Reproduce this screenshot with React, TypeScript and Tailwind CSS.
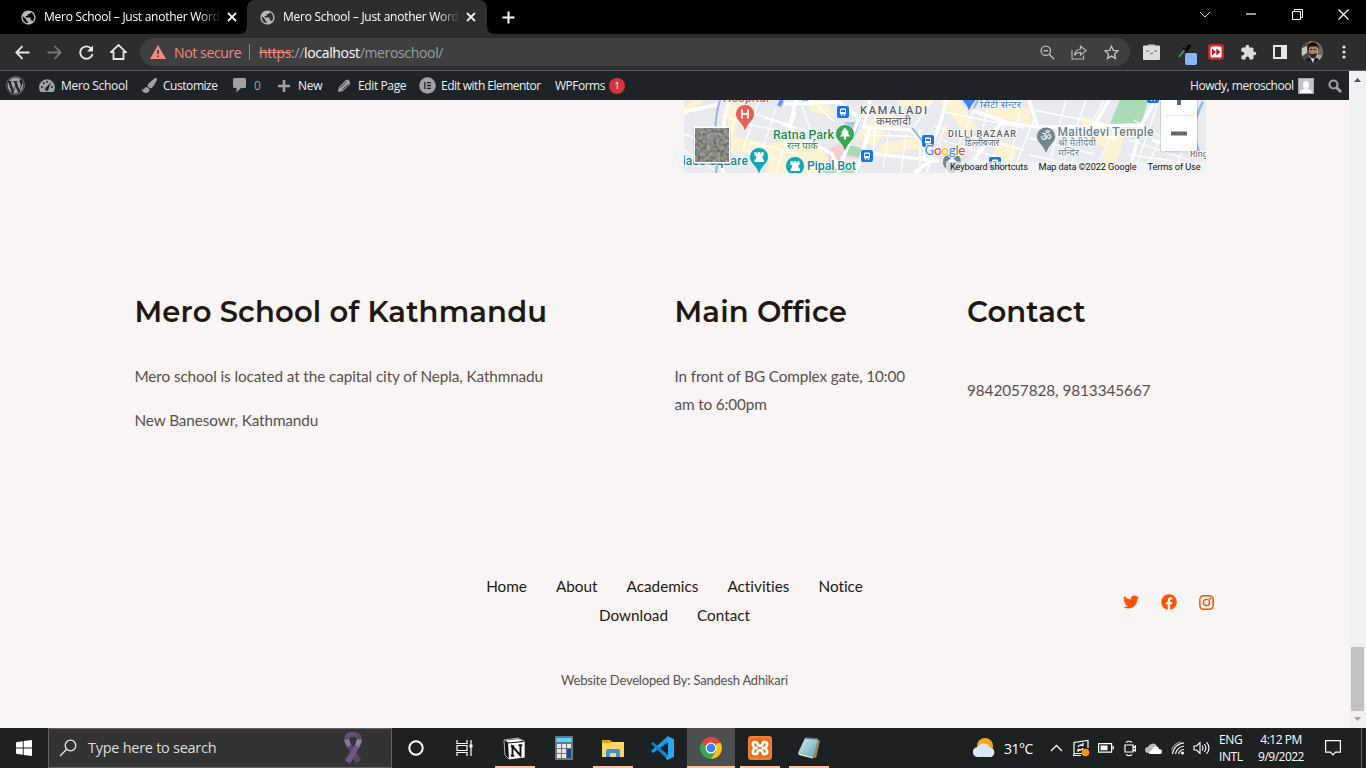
import React from "react";
import { FaWordpress, FaTwitter, FaFacebook, FaPaintBrush } from "react-icons/fa";
import { MdPublic, MdExtension } from "react-icons/md";

const UI = "font-['Open_Sans','Noto_Sans',sans-serif]";

function Close() {
  return (
    <svg width="10" height="10" viewBox="0 0 10 10" className="shrink-0">
      <path d="M1 1 9 9M9 1 1 9" stroke="#f1f1f1" strokeWidth="1.8" fill="none" />
    </svg>
  );
}

function Tab({ active = false }: { active?: boolean }) {
  return (
    <div
      className={
        active
          ? "relative flex h-[34px] w-[240px] items-center rounded-t-[8px] bg-[#2d2d2d] pl-[12px]"
          : "relative flex h-[34px] w-[239px] items-center pl-[12px]"
      }
    >
      {active && (
        <svg width="256" height="8" viewBox="0 0 256 8" className="absolute -left-2 bottom-0">
          <path d="M0 8Q8 8 8 0V8ZM256 8Q248 8 248 0V8Z" fill="#2d2d2d" />
        </svg>
      )}
      <MdPublic className="h-[17px] w-[17px] shrink-0 text-[#b4b8bd]" />
      <div
        className={`${UI} ml-[7px] h-[18px] w-[177px] overflow-hidden text-[12px] leading-[18px] tracking-[-0.27px] whitespace-nowrap text-white [mask-image:linear-gradient(to_right,black_155px,transparent_177px)]`}
      >
        Mero School – Just another WordPress site
      </div>
      <div className="ml-[6px]">
        <Close />
      </div>
    </div>
  );
}

function TabStrip() {
  return (
    <div className="flex h-[34px] items-center bg-black pl-[8px]">
      <Tab />
      <Tab active />
      <svg width="13" height="13" viewBox="0 0 13 13" className="ml-[15px]">
        <path d="M6.5 .5v12M.5 6.5h12" stroke="#fff" strokeWidth="2" />
      </svg>
      <div className="mb-[6px] ml-auto flex">
        <div className="flex h-7 w-[46px] items-center justify-center">
          <svg width="12" height="7" viewBox="0 0 12 7">
            <path d="M1 1l5 5 5-5" stroke="#ddd" fill="none" />
          </svg>
        </div>
        <div className="flex h-7 w-[46px] items-center justify-center">
          <svg width="10" height="2">
            <path d="M0 1h10" stroke="#fff" strokeWidth="1.2" />
          </svg>
        </div>
        <div className="flex h-7 w-[46px] items-center justify-center">
          <svg width="11" height="11" viewBox="0 0 11 11" fill="none" stroke="#fff">
            <path d="M.5 2.5h8v8h-8zM2.500 2.500V.5h8v8H8.500" />
          </svg>
        </div>
        <div className="flex h-7 w-[46px] items-center justify-center">
          <svg width="11" height="11" viewBox="0 0 11 11">
            <path d="M.5.5l10 10M10.500.5l-10 10" stroke="#fff" strokeWidth="1.2" />
          </svg>
        </div>
      </div>
    </div>
  );
}

function Slot({ w, children }: { w: string; children: React.ReactNode }) {
  return <div className={`${w} flex shrink-0 items-center justify-center`}>{children}</div>;
}

function Toolbar() {
  return (
    <div className="flex h-[37px] items-center border-b border-[#5c5c5c] bg-[#2d2d2d]">
      <div className="flex w-[140px] pl-[6px]">
        <Slot w="w-8">
          <svg width="15" height="15" viewBox="0 0 15 15" fill="none" stroke="#e6e6e6" strokeWidth="1.8">
            <path d="M14.500 7.500H1.500M7.500 1.200 1.300 7.500l6.200 6.300" />
          </svg>
        </Slot>
        <Slot w="w-8">
          <svg width="15" height="15" viewBox="0 0 15 15" fill="none" stroke="#757575" strokeWidth="1.8">
            <path d="M.5 7.500h13M7.500 1.200l6.200 6.300-6.200 6.300" />
          </svg>
        </Slot>
        <Slot w="w-8">
          <svg width="15" height="15" viewBox="0 0 15 15">
            <path d="M12.300 3.700A6.200 6.200 0 1 0 13.500 9" fill="none" stroke="#e6e6e6" strokeWidth="1.9" />
            <path d="M14 .5v6H8z" fill="#e6e6e6" />
          </svg>
        </Slot>
        <Slot w="w-8">
          <svg width="17" height="16" viewBox="0 0 17 16">
            <path d="M1 8.200 8.500 1 16 8.200H13.500V15h-10V8.200Z" fill="none" stroke="#e6e6e6" strokeWidth="1.8" />
          </svg>
        </Slot>
      </div>
      <div className={`${UI} flex h-7 w-[990px] items-center rounded-full bg-[#3f3f3f] pl-[10px] text-[14px]`}>
        <svg width="16" height="14" viewBox="0 0 16 14" className="shrink-0">
          <path d="M8 0l8 14H0z" fill="#f28b82" />
          <path d="M8 5v4M8 10.500v1.700" stroke="#3f3f3f" strokeWidth="1.700" />
        </svg>
        <span className="ml-[8px] w-[75px] shrink-0 tracking-[-0.37px] whitespace-nowrap text-[#f28b82]">Not secure</span>
        <span className="h-4 w-px shrink-0 bg-[#8a8a8a]" />
        <span className="ml-[9px] w-[190px] shrink-0 tracking-[-0.34px] whitespace-nowrap text-[#9aa0a6]">
          <span className="text-[#f28b82] line-through">https</span>://<span className="text-white">localhost</span>/meroschool/
        </span>
        <div className="ml-auto flex pr-[3px]">
          <Slot w="w-8">
            <svg width="15" height="15" viewBox="0 0 15 15" fill="none" stroke="#b9b9b9" strokeWidth="1.4">
              <circle cx="5.800" cy="5.800" r="4.700" />
              <path d="M9.200 9.200l5 5M3.500 5.800h4.600" />
            </svg>
          </Slot>
          <Slot w="w-8">
            <svg width="16" height="15" viewBox="0 0 16 15" fill="none" stroke="#b9b9b9" strokeWidth="1.200">
              <path d="M1 5v9h11.500v-3.500" />
              <path d="M9.500 4V1.200L15 5.500 9.500 10V7.300C7 7.300 5 8 3.500 10.500 4 6.500 6.500 4.300 9.500 4Z" />
            </svg>
          </Slot>
          <Slot w="w-8">
            <svg width="15" height="15" viewBox="0 0 15 15" fill="none" stroke="#c4c4c4" strokeWidth="1.300">
              <path d="M7.500 1.300l1.900 4.100 4.500.5-3.300 3 .9 4.500-4-2.300-4 2.300.9-4.500-3.300-3 4.500-.5z" />
            </svg>
          </Slot>
        </div>
      </div>
      <div className="ml-[5px] flex">
        <Slot w="w-8">
          <svg width="17" height="16" viewBox="0 0 17 16">
            <path d="M5 0h7v2H5z" fill="#8d8d8d" />
            <rect y="1.500" width="17" height="14.500" rx="1" fill="#dedede" />
            <path d="M3 6.500q1.500 2 3 0M11 6.500q1.500 2 3 0M7 9q1.500 1.500 3 0" stroke="#555" fill="none" />
          </svg>
        </Slot>
        <Slot w="w-10">
          <svg width="20" height="22" viewBox="0 0 20 22" className="mt-[6px] ml-[2px]">
            <path d="M1 13 8 4" stroke="#4d8f57" strokeWidth="2" />
            <path d="M7 5l3-4q3-2 3 1l-3 4z" fill="#050505" />
            <path d="M5 4l5 4" stroke="#111" strokeWidth="2" />
            <rect x="7" y="9" width="12" height="12" rx="2" fill="#8ab4f8" />
          </svg>
        </Slot>
        <Slot w="w-[18px]">
          <svg width="16" height="16" viewBox="0 0 16 16">
            <rect width="16" height="16" rx="3" fill="#c62828" />
            <rect x="2.500" y="2.500" width="11" height="11" rx="1.500" fill="#fff" />
            <path d="M4 4.500 8 8l-4 3.500zM8.300 4.500 12.500 8l-4.200 3.500z" fill="#b71c1c" />
          </svg>
        </Slot>
        <div className="ml-[7px] flex">
          <Slot w="w-8">
            <MdExtension className="h-[17px] w-[17px] text-[#dcdcdc]" />
          </Slot>
          <Slot w="w-8">
            <svg width="14" height="14" viewBox="0 0 14 14">
              <path d="M0 0h14v14H0zM2 2v10h6V2z" fill="#e8e8e8" fillRule="evenodd" />
            </svg>
          </Slot>
          <Slot w="w-8">
            <svg width="22" height="22" viewBox="0 0 22 22">
              <defs>
                <clipPath id="face">
                  <circle cx="11" cy="11" r="10.800" />
                </clipPath>
              </defs>
              <g clipPath="url(#face)">
                <rect width="22" height="22" fill="#a9a297" />
                <path d="M0 0h8v22H0z" fill="#4b4743" />
                <path d="M1 7l5-2v7l-5 3z" fill="#c9c4bd" />
                <path d="M17 0h5v14h-5z" fill="#6d675f" />
                <path d="M2 22q2-6 9-6t9 6z" fill="#1d1d2a" />
                <path d="M9 16h5l-2 6z" fill="#d9dce6" />
                <ellipse cx="12" cy="10" rx="4.200" ry="6" fill="#a9806c" />
                <path d="M7 9Q6 1 12 1t5.500 8L16 5.500H9z" fill="#15110f" />
                <path d="M8 12q4 2 8 0-.5 5-4 5.500Q8.500 17 8 12z" fill="#332621" />
                <path d="M9 8.500h2.300M12.800 8.500H15" stroke="#2a1d18" />
              </g>
            </svg>
          </Slot>
          <Slot w="w-8">
            <svg width="4" height="14" viewBox="0 0 4 14" fill="#e2e2e2">
              <circle cx="2" cy="2" r="1.600" />
              <circle cx="2" cy="7" r="1.600" />
              <circle cx="2" cy="12" r="1.600" />
            </svg>
          </Slot>
        </div>
      </div>
    </div>
  );
}

function AdminBar() {
  return (
    <div
      className={`${UI} flex h-[29px] items-center bg-[#1d2327] pl-[6px] text-[12px] tracking-[-0.3px] whitespace-nowrap text-[#f0f0f1]`}
    >
      <FaWordpress className="h-[19px] w-[19px] shrink-0 text-[#9ca2a7]" />
      <svg width="16" height="14" viewBox="0 0 16 14" className="ml-[14px] shrink-0">
        <path d="M1.500 13A8 8 0 1 1 14.500 13Z" fill="#9ca2a7" />
        <g fill="#1d2327">
          <circle cx="3" cy="8" r="1" />
          <circle cx="4.800" cy="4.300" r="1" />
          <circle cx="8" cy="2.800" r="1" />
          <circle cx="13" cy="8" r="1" />
          <path d="M12.300 3.200 9.500 9.500a1.800 1.800 0 1 1-2.500-1z" />
        </g>
      </svg>
      <span className="ml-[6px] w-[81px]">Mero School</span>
      <FaPaintBrush className="h-[15px] w-[15px] shrink-0 text-[#9ca2a7]" />
      <span className="ml-[6px] w-[70px] tracking-[-0.45px]">Customize</span>
      <svg width="13" height="15" viewBox="0 0 13 15" className="shrink-0">
        <path d="M1.500 0h10q1.500 0 1.500 1.500v7q0 1.500-1.500 1.500H8l-4.500 4.500V10h-2Q0 10 0 8.500v-7Q0 0 1.500 0z" fill="#9ca2a7" />
      </svg>
      <span className="ml-[8px] w-[24px] text-[#9ca2a7]">0</span>
      <svg width="12" height="12" viewBox="0 0 12 12" className="shrink-0">
        <path d="M6 0v12M0 6h12" stroke="#9ca2a7" strokeWidth="2.600" />
      </svg>
      <span className="ml-[8px] w-[39px]">New</span>
      <svg width="14" height="14" viewBox="0 0 14 14" className="shrink-0">
        <path d="M1 13l1-5L9 1q1.500-1 3 .5t1 3.500l-7 7z" fill="#9ca2a7" />
        <path d="M3 9 9.500 2.800M5 11 11.500 5" stroke="#1d2327" strokeWidth=".8" />
      </svg>
      <span className="ml-[7px] w-[61px] tracking-[-0.38px]">Edit Page</span>
      <svg width="17" height="17" viewBox="0 0 17 17" className="shrink-0">
        <circle cx="8.500" cy="8.500" r="8.300" fill="#9ca2a7" />
        <path d="M5.800 5v7M8 5.700h4M8 8.500h4M8 11.300h4" stroke="#1d2327" strokeWidth="1.300" />
      </svg>
      <span className="ml-[5px] w-[114px] tracking-[-0.52px]">Edit with Elementor</span>
      <span className="w-[54px] tracking-[-0.5px]">WPForms</span>
      <span className="flex h-4 w-4 items-center justify-center rounded-full bg-[#d63638] text-[9px] text-white">1</span>
      <span className="ml-auto w-[108px] tracking-[-0.45px]">Howdy, meroschool</span>
      <span className="flex h-4 w-4 shrink-0 items-end justify-center border border-[#a5a8aa] bg-[#c5c5c5]">
        <svg width="12" height="13" viewBox="0 0 12 13" fill="#fff">
          <ellipse cx="6" cy="5" rx="3" ry="4" />
          <path d="M0 13q0-3 4-4h4q4 1 4 4z" />
        </svg>
      </span>
      <svg width="14" height="14" viewBox="0 0 14 14" className="mr-[7px] ml-[14px] shrink-0" fill="none" stroke="#9ca2a7">
        <circle cx="5.500" cy="5.500" r="4" strokeWidth="2.200" />
        <path d="M8.500 8.500l4.500 4.500" strokeWidth="3" />
      </svg>
    </div>
  );
}

function Bus({ x, y }: { x: number; y: number }) {
  return (
    <g transform={`translate(${x - 6} ${y - 6})`}>
      <rect width="12" height="12" rx="2" fill="#1a73e8" />
      <rect x="3" y="2.500" width="6" height="6" rx="1" fill="#fff" />
      <path d="M4 4h4v2H4z" fill="#1a73e8" />
      <path d="M4 9.500h1.200M7 9.500h1.200" stroke="#fff" />
    </g>
  );
}

function Pin({ x, y, fill, children }: { x: number; y: number; fill: string; children?: React.ReactNode }) {
  return (
    <g transform={`translate(${x} ${y})`}>
      <path d="M-9.500 0a9.500 9.500 0 0 1 19 0c0 5-4 7-7 12L0 17.500-2.500 12c-3-5-7-7-7-12z" fill={fill} stroke="#fff" strokeWidth=".7" />
      {children}
    </g>
  );
}

function Castle() {
  return <path d="M-4.500-5h2v1.500h1.300V-5h2.400v1.500h1.300V-5h2v4h-1.300l.7 3.500h1.100V5h-9.500V2.500h1.100l.7-3.500h-1.800z" fill="#fff" />;
}

function MapStrip() {
  const t = "fill-current font-['Roboto','Noto_Sans',sans-serif]";
  return (
    <svg width="522" height="73" viewBox="0 0 522 73" className="block">
      <defs>
        <filter id="grain" x="0" y="0" width="100%" height="100%">
          <feTurbulence type="fractalNoise" baseFrequency=".3" numOctaves="3" seed="8" />
          <feColorMatrix values=".45 0 0 0 .02  .45 0 0 0 .03  .45 0 0 0 .0  0 0 0 0 1" />
        </filter>
      </defs>
      <rect width="522" height="73" fill="#e8eaed" />
      <g fill="#fdf3d3">
        <path d="M42 0l20 0-12 36 40 9-5 15-38-9zM85 44l45-6 15 22-8 13H84zM120 0l20 0 10 16-22-4zM170 38l28-28 12 5-18 32zM196 44l44-8v12l-44 6zM255 0l20 0 18 28-14 3zM300 3l45 5 3 16-44-8zM396 15l30 10-4 22-20-7zM425 32l18-4-14 45h-14zM0 7l10-7h10L0 17zM215 0h35l-5 8-30-2zM310 40l25 6-6 16-16-5z" />
      </g>
      <path d="M161 22h15l-5 14-15 2z" fill="#a4c3f8" />
      <path d="M143 50l12-6 29 9-2 6-26-3v17h-8z" fill="#f6ced0" />
      <path d="M158 42l26 9-2 8-21-5z" fill="#a5dbb5" />
      <path d="M139 68h36v5h-36zM436 0h28l-7 25q-15 5-31-1z" fill="#a9dbb6" />
      <g fill="none" stroke="#fff" strokeWidth="1.300">
        <path d="M38 15l24 9 30 6M50 8l55 16M58 0l-14 40M75 0l-16 50M92 8l-18 55M112 12l-20 61M66 42l48 12M60 50l35 10M98 25l25 6M118 5l10 30M128 0l22 22M80 18l40 12M180 35l60 2M192 20l-4 42M205 32l-6 35M222 34l-5 39M236 30v43M248 0l-20 30M262 25l-20 48M290 10l-28 63M305 0l-15 73M322 20l-18 53M338 0l-14 73M352 14l-20 50M382 0l-18 70M402 0l-26 73M420 0l-38 73M430 28l-20 45M260 12l80 16M250 26l90 24M258 40l80 25M345 38l65 16M350 10l70 14M345 55l70 15M450 20l40 25M445 40l60 20M475 0l-25 73M490 10l-30 63M510 20l-20 53M445 55l75 10M0 34l60 22M0 50l30 20" />
      </g>
      <g fill="none" stroke="#fff" strokeWidth="3.500">
        <path d="M45 0q-10 34-6 73M0 12 36 4M112 0l-7 30 43 24 8 19M100 4l55-2 20 16-22 56M186 0l-6 27 48 3 22 30M186 28l-14 45M183 53l72 8M248 60l-18 13M290 11l35 12 28 4 62 0M318 22l-28 38 60 13M345 0l8 25M410 26l47-1 15-25M457 25l-12 48M425 0l-15 26 22 14M262 0q-6 34-25 60M468 40l34 10 20 8" />
      </g>
      <path d="M36 0q-9 31 0 45l-4 28M124 0h-6M228 28l11 14M98 0l-4 5M294 0l-4 8" fill="none" stroke="#8eb4f4" strokeWidth="2" />
      <path d="M98 0l-3 6" stroke="#5e97f6" strokeWidth="4" />
      <path d="M519 2q-14 24-4 50" fill="none" stroke="#8bb6f4" strokeWidth="2.500" />

      <g stroke="#fff" strokeWidth="2" strokeOpacity=".8" fontWeight="500">
        <g className="text-[#d85a52]">
          <text className={t} x="39" y="2" fontSize="11.500" textLength="46" style={{ paintOrder: "stroke" }}>Hospital</text>
        </g>
        <g className="text-[#5b6068]">
          <text className={t} x="176" y="14" fontSize="11" textLength="67" style={{ paintOrder: "stroke" }}>KAMALADI</text>
          <text className={t} x="192" y="25" fontSize="10.500" textLength="35" lengthAdjust="spacingAndGlyphs" fontWeight="400" style={{ paintOrder: "stroke" }}>कमलादी</text>
          <text className={t} x="264" y="36.500" fontSize="9" textLength="68" style={{ paintOrder: "stroke" }}>DILLI BAZAAR</text>
          <text className={t} x="281" y="46" fontSize="9" textLength="34" lengthAdjust="spacingAndGlyphs" fontWeight="400" style={{ paintOrder: "stroke" }}>डिल्लीबजार</text>
          <text className={t} x="506" y="57" fontSize="9" fontWeight="400" style={{ paintOrder: "stroke" }}>Ring</text>
        </g>
        <g className="text-[#218d48]">
          <text className={t} x="89" y="38.500" fontSize="12.500" textLength="61" style={{ paintOrder: "stroke" }}>Ratna Park</text>
          <text className={t} x="103" y="49" fontSize="10" textLength="31" lengthAdjust="spacingAndGlyphs" fontWeight="400" style={{ paintOrder: "stroke" }}>रत्न पार्क</text>
        </g>
        <g className="text-[#138a9c]">
          <text className={t} x="-16" y="65" fontSize="12" textLength="80" style={{ paintOrder: "stroke" }}>Palace Square</text>
          <text className={t} x="123" y="70" fontSize="12.500" textLength="49" style={{ paintOrder: "stroke" }}>Pipal Bot</text>
        </g>
        <g className="text-[#6d8390]">
          <text className={t} x="373.500" y="36" fontSize="12" textLength="96" style={{ paintOrder: "stroke" }}>Maitidevi Temple</text>
          <text className={t} x="374" y="46" fontSize="9.500" textLength="38" lengthAdjust="spacingAndGlyphs" fontWeight="400" style={{ paintOrder: "stroke" }}>श्री मैतीदेवी</text>
          <text className={t} x="374" y="56" fontSize="9.500" textLength="21" lengthAdjust="spacingAndGlyphs" fontWeight="400" style={{ paintOrder: "stroke" }}>मन्दिर</text>
        </g>
        <g className="text-[#4484ee]">
          <text className={t} x="296" y="8" fontSize="10" textLength="41" lengthAdjust="spacingAndGlyphs" fontWeight="400" style={{ paintOrder: "stroke" }}>सिटी सेन्टर</text>
        </g>
      </g>

      <Bus x={159} y={12} />
      <Bus x={244} y={41} />
      <Bus x={183} y={56} />
      <Bus x={311} y={63} />
      <Bus x={469} y={-3} />
      <Pin x={61} y={14} fill="#ec5f57">
        <path d="M-3-4.500v9M3-4.500v9M-3 0h6" stroke="#fff" strokeWidth="1.800" />
      </Pin>
      <Pin x={161} y={34} fill="#34a853">
        <path d="M0-6.500 4-1.500H2.500L5 2.500H1V5.500h-2V2.500h-4l2.500-4H-4z" fill="#fff" />
      </Pin>
      <Pin x={75} y={57} fill="#12a8b5">
        <Castle />
      </Pin>
      <Pin x={111} y={66} fill="#12a8b5">
        <Castle />
      </Pin>
      <Pin x={285} y={-6} fill="#4285f4" />
      <Pin x={362} y={36.500} fill="#71868f">
        <text x="0" y="4" fontSize="12" textAnchor="middle" fill="#fff" className="font-['Noto_Sans',sans-serif]">ॐ</text>
      </Pin>
      <Pin x={268} y={62} fill="#71868f">
        <path d="M-5 0 0-5 5 0z" fill="#fff" />
      </Pin>

      <rect x="262" y="61.500" width="260" height="11.500" fill="#f5f5f5" fillOpacity=".75" />
      <g fontSize="9.200" fill="#111" className="font-['Roboto',sans-serif]">
        <text x="266" y="70" textLength="78">Keyboard shortcuts</text>
        <text x="354.500" y="70" textLength="98">Map data ©2022 Google</text>
        <text x="463.500" y="70" textLength="53">Terms of Use</text>
      </g>
      <text x="240.500" y="54.500" fontSize="13.500" fontWeight="500" textLength="41" stroke="#fff" strokeWidth="1.800" style={{ paintOrder: "stroke" }} className="font-['Lato',sans-serif]">
        <tspan fill="#4285f4">G</tspan>
        <tspan fill="#ea4335">o</tspan>
        <tspan fill="#fbbc04">o</tspan>
        <tspan fill="#4285f4">g</tspan>
        <tspan fill="#34a853">l</tspan>
        <tspan fill="#ea4335">e</tspan>
      </text>

      <rect x="9" y="27" width="38" height="38" rx="2" fill="#000" fillOpacity=".2" />
      <rect x="9.500" y="26.500" width="37" height="37" rx="1" fill="#fff" />
      <rect x="11.500" y="28.500" width="33" height="33" filter="url(#grain)" />

      <rect x="476" y="-2" width="38" height="54.500" rx="2" fill="#000" fillOpacity=".12" />
      <rect x="477" y="-2" width="36" height="53" rx="2" fill="#fff" />
      <path d="M481.500 15.500h27.500" stroke="#e6e6e6" />
      <rect x="493" y="0" width="4" height="5" fill="#666" />
      <rect x="487" y="31.500" width="16" height="4" fill="#666" />
    </svg>
  );
}

function Links({ items }: { items: string[] }) {
  return (
    <div className="flex h-[29px] justify-center gap-[29px]">
      {items.map((i) => (
        <a key={i} className="leading-[29px]">
          {i}
        </a>
      ))}
    </div>
  );
}

function Heading({ children }: { children: string }) {
  return (
    <h2 className="h-[36px] font-['Montserrat','Inter',sans-serif] text-[29px] leading-[36px] font-semibold tracking-[0.17px] whitespace-nowrap text-[#1f1811]">
      {children}
    </h2>
  );
}

function Page() {
  return (
    <main className="h-[628px] bg-[#f9f5f4] font-['Lato',sans-serif] text-[15.3px] leading-[28px] text-[#57504d] [font-variant-ligatures:none]">
      <div className="pl-[684px]">
        <MapStrip />
      </div>
      <section className="flex h-[308px] pt-[121px] pl-[134.5px] tracking-[-0.1px]">
        <div className="w-[540px]">
          <Heading>Mero School of Kathmandu</Heading>
          <p className="mt-[32px] whitespace-nowrap">Mero school is located at the capital city of Nepla, Kathmnadu</p>
          <p className="mt-[16px]">New Banesowr, Kathmandu</p>
        </div>
        <div className="w-[292.500px]">
          <Heading>Main Office</Heading>
          <p className="mt-[32px] w-[245px] tracking-[-0.13px]">In front of BG Complex gate, 10:00 am to 6:00pm</p>
        </div>
        <div>
          <Heading>Contact</Heading>
          <p className="mt-[46px] tracking-[-0.06px]">9842057828, 9813345667</p>
        </div>
      </section>
      <footer className="grid grid-cols-[486px_377px_486px] pt-[91px]">
        <nav className="col-start-2 text-[#1f1811]">
          <Links items={["Home", "About", "Academics", "Activities", "Notice"]} />
          <Links items={["Download", "Contact"]} />
        </nav>
        <div className="flex items-center gap-[22px] pt-[2px] pl-[260px] text-[#ff5100]">
          <FaTwitter className="h-4 w-4" />
          <FaFacebook className="h-4 w-4" />
          <svg width="15" height="15" viewBox="0 0 16 16" fill="none" stroke="currentColor">
            <rect x=".9" y=".9" width="14.200" height="14.200" rx="3.800" strokeWidth="1.600" />
            <circle cx="8" cy="8" r="3.300" strokeWidth="1.500" />
            <circle cx="12" cy="4" r="1" fill="currentColor" stroke="none" />
          </svg>
        </div>
        <p className="col-start-2 mt-[36px] text-center text-[13px] leading-[28px] tracking-[-0.21px]">Website Developed By: Sandesh Adhikari</p>
      </footer>
    </main>
  );
}

function Scrollbar() {
  return (
    <div className="flex h-[657px] w-[17px] flex-col items-center bg-[#f1f1f1]">
      <svg width="7" height="4" viewBox="0 0 7 4" className="mt-[7px]">
        <path d="M0 4l3.500-4L7 4z" fill="#505050" />
      </svg>
      <div className="mt-[565px] h-[64px] w-[13px] bg-[#c1c1c1]" />
      <svg width="7" height="4" viewBox="0 0 7 4" className="mt-[6px]">
        <path d="M0 0l3.500 4L7 0z" fill="#a3a3a3" />
      </svg>
    </div>
  );
}

function TaskItem({ state, children }: { state?: "open" | "active"; children?: React.ReactNode }) {
  return (
    <div
      className={
        state === "active"
          ? "relative ml-px flex h-10 w-[48px] items-center justify-center bg-[#4b4f50]"
          : "relative flex h-10 w-[49px] items-center justify-center"
      }
    >
      {children}
      {state && (
        <span
          className={
            state === "active"
              ? "absolute inset-x-0 bottom-0 h-[2px] bg-[#ffc0a4]"
              : "absolute bottom-0 left-[5px] h-[2px] w-10 bg-[#ffc0a4]"
          }
        />
      )}
    </div>
  );
}

function Taskbar() {
  return (
    <div className={`${UI} flex h-10 items-center bg-[#1c2121] text-white`}>
      <div className="flex w-[48px] justify-center">
        <svg width="16" height="16" viewBox="0 0 16 16" fill="#fff">
          <path d="M0 2.200 6.800 1.200V7.500H0zM7.700 1.100 16 0V7.500H7.700zM0 8.400h6.800v6.400L0 13.800zM7.700 8.400H16V16l-8.300-1.100z" />
        </svg>
      </div>
      <div className="flex h-10 w-[344px] items-center border border-[#606262] bg-[#333333] pl-[10px]">
        <svg width="18" height="18" viewBox="0 0 18 18" fill="none" stroke="#e8e8e8" strokeWidth="1.300">
          <circle cx="11.500" cy="6.500" r="5.300" />
          <path d="M7.700 10.300 1 17" />
        </svg>
        <span className="ml-[11px] w-[255px] text-[14.5px] tracking-[-0.27px] text-[#dedede]">Type here to search</span>
        <svg width="20" height="34" viewBox="0 0 20 34">
          <defs>
            <linearGradient id="rib" x1="0" y1="0" x2="1" y2="1">
              <stop offset="0" stopColor="#6d5c80" />
              <stop offset="1" stopColor="#4f3f63" />
            </linearGradient>
          </defs>
          <path d="M1 8Q2 1 10 1t9 7l-5 1q-.5-3-4-3T6 9z" fill="url(#rib)" />
          <path d="M1 8l5 0q1 4 4 7l8 14-5 4L6 19Q1.500 14 1 8z" fill="#574769" />
          <path d="M19 8l-5 1q-1 4-4 8L2 29l5 4 7-13q5-6 5-12z" fill="#6c5884" />
          <path d="M1 9l5-1 2 6-4 2zM19 9l-5-1-2 6 4 2z" fill="#a59cb2" fillOpacity=".6" />
        </svg>
      </div>
      <TaskItem>
        <svg width="16" height="16" viewBox="0 0 16 16" className="-ml-[2px]">
          <circle cx="8" cy="8" r="6.700" fill="none" stroke="#fff" strokeWidth="2" />
        </svg>
      </TaskItem>
      <TaskItem>
        <svg width="17" height="16" viewBox="0 0 17 16" fill="none" stroke="#fff" strokeWidth="1.200" className="-ml-[2px]">
          <path d="M1 0v3.500h10V0M1 16v-3.500h10V16M1 5.500h10v5H1zM15 0v16" />
          <path d="M13.500 4.500h3v3h-3z" fill="#fff" stroke="none" />
        </svg>
      </TaskItem>
      <TaskItem state="open">
        <svg width="23" height="23" viewBox="0 0 23 23">
          <path d="M1 3 15 1l6 3v16l-15 2-4-4z" fill="#111" stroke="#ddd" strokeWidth=".8" />
          <path d="M5 6.500 21.500 5v15.500L6 22z" fill="#fff" />
          <path d="M2 3.500 15 2l5 2-15 1.500z" fill="#fff" />
          <path d="M9.500 18.500V9.500l8 9V8.500M7.800 9.300h3.500M15.500 8.300h3.800M7.800 18.700h3.500" fill="none" stroke="#111" strokeWidth="1.900" />
        </svg>
      </TaskItem>
      <TaskItem>
        <svg width="18" height="24" viewBox="0 0 18 24">
          <rect width="18" height="24" rx="1" fill="#6c7780" />
          <rect x="1.500" y="2" width="15" height="4" fill="#4ddcff" />
          <g fill="#e6e9ec">
            <path d="M2 8h4v4H2zM7 8h4v4H7zM12 8h4v4h-4zM2 13h4v4H2zM7 13h4v4H7zM2 18h4v4H2zM7 18h4v4H7z" />
          </g>
          <path d="M12 13h4v9h-4z" fill="#14468f" />
        </svg>
      </TaskItem>
      <TaskItem state="open">
        <svg width="22" height="19" viewBox="0 0 22 19">
          <path d="M0 1h8l2 2h12v3H0z" fill="#e0a500" />
          <path d="M0 4h8l2-1h12v15H0z" fill="#ffd667" />
          <path d="M4 18v-6q0-2 2-2h10q2 0 2 2v6h-4v-4H8v4z" fill="#3d92d8" />
        </svg>
      </TaskItem>
      <TaskItem>
        <svg width="24" height="24" viewBox="0 0 24 24">
          <path d="M18 0 1 15l2 2L20 5z" fill="#2197e6" />
          <path d="M1 7.500 3 6l15 13v5z" fill="#1683cf" />
          <path d="M17 0l7 3v18l-7 3-1-2 2-1V3z" fill="#24a8f2" />
        </svg>
      </TaskItem>
      <TaskItem state="active">
        <svg width="22" height="22" viewBox="0 0 22 22">
          <path d="M11 11 1.500 5.500A11 11 0 0 1 20.500 5.500H11z" fill="#ea4335" />
          <path d="M11 11 1.500 5.500A11 11 0 0 0 11 22l4.700-8.200z" fill="#34a853" />
          <path d="M20.500 5.500A11 11 0 0 1 11 22l4.800-8.200L16 6z" fill="#fbc116" />
          <path d="M11 5.500h9.500L11 8z" fill="#ea4335" />
          <circle cx="11" cy="11" r="5.500" fill="#fff" />
          <circle cx="11" cy="11" r="4.300" fill="#3b82f0" />
        </svg>
      </TaskItem>
      <div className="flex">
        <TaskItem state="open">
          <svg width="24" height="24" viewBox="0 0 24 24">
            <rect width="24" height="24" rx="3" fill="#e96f1b" />
            <rect x="1" y="1" width="22" height="22" rx="2.500" fill="none" stroke="#f6a868" strokeWidth=".7" />
            <path d="M8.500 12H7Q4.800 10.500 4.800 8.300T7 6t2.500 1.800T12 9.800t2.500-2T17 6t2.200 2.300T17 12h-2M7 12q-2.200 1.500-2.200 3.700T7 18t2.500-1.800 2.500-2 2.500 2T17 18t2.200-2.300T17 12" fill="none" stroke="#fff" strokeWidth="2.700" strokeLinejoin="round" strokeLinecap="round" />
          </svg>
        </TaskItem>
        <TaskItem state="open">
          <svg width="24" height="22" viewBox="0 0 24 22">
            <defs>
              <linearGradient id="pad" x1="0" y1="0" x2="1" y2="1">
                <stop offset="0" stopColor="#d5edf0" />
                <stop offset="1" stopColor="#5fa5b2" />
              </linearGradient>
            </defs>
            <path d="M20 2l3 2-4 17-4-1z" fill="#9b8659" />
            <path d="M8 1l13 1-5 18L1 16z" fill="url(#pad)" />
            <path d="M1 16l15 4 0 1.500L2 18z" fill="#e7eff0" />
            <path d="M8 1l13 1" stroke="#60767a" strokeWidth="1.500" />
          </svg>
        </TaskItem>
      </div>

      <div className="ml-auto flex h-10 items-center">
        <svg width="23" height="20" viewBox="0 0 23 20">
          <circle cx="12" cy="8" r="8" fill="#f9a51a" />
          <path d="M5 19a5 5 0 0 1-.5-10A7 7 0 0 1 17 9.500 5 5 0 0 1 18.500 19z" fill="#d9e6fb" />
        </svg>
        <span className="ml-[8px] w-[42px] text-[14px] tracking-[-0.5px]">31°C</span>
        <Slot w="w-[24px]">
          <svg width="13" height="8" viewBox="0 0 13 8" className="mr-[3px]" fill="none" stroke="#fff" strokeWidth="1.300">
            <path d="M1 7l5.500-5.500L12 7" />
          </svg>
        </Slot>
        <Slot w="w-[24px]">
          <svg width="18" height="18" viewBox="0 0 18 18" fill="none" stroke="#fff" strokeWidth="1.200" className="mr-[2px]">
            <path d="M10 14.500H2V3.500L16 1.500V9M2 14.500v2M1 16.500h8" />
            <path d="M6 8q1-3 4.500-2M11 3.800v2.700H8.300M11 9q-1 3-4.500 2M6 13v-2.500h2.500" />
            <circle cx="13.500" cy="13.500" r="3.800" fill="#ff9500" stroke="none" />
          </svg>
        </Slot>
        <Slot w="w-[24px]">
          <svg width="16" height="10" viewBox="0 0 16 10" className="mr-px">
            <path d="M.6.600h13v8.500H.6zM15.200 3v3.500" fill="none" stroke="#fff" strokeWidth="1.200" />
            <path d="M2.500 2.500h7v4.700h-7z" fill="#fff" />
          </svg>
        </Slot>
        <Slot w="w-[24px]">
          <svg width="12" height="17" viewBox="0 0 12 17" fill="none" stroke="#fff" strokeWidth="1.200" className="mr-px">
            <path d="M2 2.500Q5 0 8 2.500M2 14.500q3 2.500 6 0M1 5h8v7H1zM9 7.500l2.500-1.500v5L9 9.500" />
          </svg>
        </Slot>
        <Slot w="w-[24px]">
          <svg width="17" height="11" viewBox="0 0 17 11" className="mr-[2px]">
            <path d="M3 10a3 3 0 0 1 0-6 5 5 0 0 1 9-1l-7 7z" fill="#b9b9b9" />
            <path d="M4 11q0-3 3-4 1-4 5-3.500 2 .5 2 2.500 3 0 3 2.500T15 11z" fill="#fff" />
          </svg>
        </Slot>
        <Slot w="w-[24px]">
          <svg width="14" height="14" viewBox="0 0 14 14" fill="none" stroke="#fff" strokeWidth="1.100">
            <path d="M1.500 13A12 12 0 0 1 13 2M4.500 13A9 9 0 0 1 13 5.300M7.500 13A6 6 0 0 1 13 8.500" />
            <path d="M.5 9A14 14 0 0 1 10 .6" stroke="#8a8a8a" />
            <circle cx="11.500" cy="12" r="1.500" fill="#fff" stroke="none" />
          </svg>
        </Slot>
        <Slot w="w-[24px]">
          <svg width="17" height="14" viewBox="0 0 17 14" fill="none" stroke="#fff" strokeWidth="1.100" className="mr-[2px]">
            <path d="M1 5h2.500L7 1.500v11L3.500 9H1zM9 4.500q2 2.500 0 5M11.300 3q3.300 4 0 8M13.500 1.200q5 5.800 0 11.600" />
          </svg>
        </Slot>
        <div className="ml-[5px] w-[38px] text-[12px] leading-[17px] tracking-[-0.4px]">
          <div>ENG</div>
          <div>INTL</div>
        </div>
        <div className="w-[48px] text-center text-[12px] leading-[17px] tracking-[-0.5px] whitespace-nowrap">
          <div>4:12 PM</div>
          <div>9/9/2022</div>
        </div>
        <svg width="16" height="16" viewBox="0 0 16 16" className="mr-[20px] ml-[20px]" fill="none" stroke="#fff" strokeWidth="1.200">
          <path d="M.6.600h14.800v11.500H10.500L8 14.800l-2.500-2.700H.6z" />
        </svg>
        <span className="mr-[4px] h-10 w-px bg-[#5a5d5d]" />
      </div>
    </div>
  );
}

export default function App() {
  return (
    <div className="h-[768px] w-[1366px] overflow-hidden bg-black">
      <TabStrip />
      <Toolbar />
      <div className="flex h-[657px]">
        <div className="w-[1349px]">
          <AdminBar />
          <Page />
        </div>
        <Scrollbar />
      </div>
      <Taskbar />
    </div>
  );
}
